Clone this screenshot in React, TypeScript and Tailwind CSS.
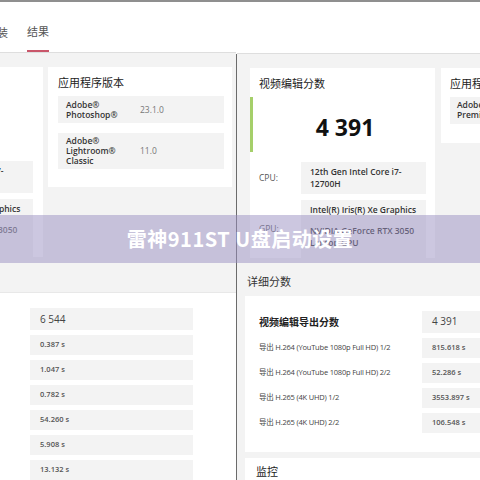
import React from 'react'

const sans = { fontFamily: '"Open Sans", "Noto Sans CJK SC", sans-serif' }
const cjk = { fontFamily: '"Liberation Serif", "Noto Sans CJK SC", serif' }

const leftTimes = ['0.387 s', '1.047 s', '0.782 s', '54.260 s', '5.908 s', '13.132 s']
const rightRows = [
  ['导出 H.264 (YouTube 1080p Full HD) 1/2', '815.618 s'],
  ['导出 H.264 (YouTube 1080p Full HD) 2/2', '52.286 s'],
  ['导出 H.265 (4K UHD) 1/2', '3553.897 s'],
  ['导出 H.265 (4K UHD) 2/2', '106.548 s'],
]

function LeftHalf() {
  return (
    <div className="flex flex-col overflow-hidden">
      <div className="h-[52px] bg-white border-b border-[#dedede] flex items-end gap-[19px] pl-0">
        <span className="text-[11px] text-[#555] pb-[11px] -ml-[3px]" style={cjk}>装</span>
        <span className="text-[11px] text-[#555] pb-[10px] border-b-2 border-[#c9566a] w-[22px] text-center" style={cjk}>结果</span>
      </div>
      <div className="h-[243px] bg-[#f3f3f3] pt-[14px] flex gap-[5px]">
        <div className="w-[43px] h-[190px] bg-white pt-[94px] flex flex-col gap-[6px] shrink-0">
          <div className="h-[32px] bg-[#f3f3f3] w-[33px] text-[8.5px] font-semibold text-[#333] pt-[4px] leading-[12px] overflow-hidden" style={sans}>
            <div className="-ml-[4px]">7-</div>
          </div>
          <div className="h-[58px] bg-[#f3f3f3] w-[33px] text-[8.5px] font-semibold text-[#333] pt-[4px] leading-[12px] overflow-hidden" style={sans}>
            <div className="-ml-[6px] whitespace-nowrap">aphics</div>
            <div className="mt-[9px] -ml-[2px] text-[#666]">3050</div>
          </div>
        </div>
        <div className="w-[184px] h-[120px] bg-white px-[10px] pt-[8px] shrink-0">
          <div className="text-[11px] text-[#222] leading-[16px]" style={cjk}>应用程序版本</div>
          <div className="mt-[5px] mr-[-2px] flex flex-col gap-[10px]">
            <div className="h-[27px] bg-[#f3f3f3] flex items-center pl-[8px] text-[8.5px] leading-[10px]" style={sans}>
              <div className="w-[74px] font-semibold text-[#333]">Adobe®<br />Photoshop®</div>
              <div className="text-[#777]">23.1.0</div>
            </div>
            <div className="h-[36px] bg-[#f3f3f3] flex items-center pl-[8px] text-[8.5px] leading-[10px]" style={sans}>
              <div className="w-[74px] font-semibold text-[#333]">Adobe®<br />Lightroom®<br />Classic</div>
              <div className="text-[#777]">11.0</div>
            </div>
          </div>
        </div>
      </div>
      <div className="flex-1 bg-white border-t border-[#e8e8e8] pt-[15px] pl-[30px]" style={sans}>
        <div className="w-[163px] h-[22px] bg-[#f3f3f3] flex items-center pl-[10px] text-[10px] text-[#444]">6 544</div>
        {leftTimes.map(t => (
          <div key={t} className="w-[163px] h-[20px] bg-[#f3f3f3] flex items-center pl-[10px] text-[7.5px] font-semibold text-[#555] mt-[5px]">{t}</div>
        ))}
      </div>
    </div>
  )
}

function RightHalf() {
  return (
    <div className="flex flex-col overflow-hidden">
      <div className="h-[52px] bg-white border-b border-[#dedede]" />
      <div className="h-[243px] bg-[#f3f3f3] pt-[14px] pl-[13px] flex flex-col">
        <div className="flex gap-[6px]">
          <div className="w-[185px] h-[190px] bg-white pt-[8px] shrink-0">
            <div className="pl-[9px] text-[11px] text-[#222] leading-[16px]" style={cjk}>视频编辑分数</div>
            <div className="mt-[5px] h-[55px] border-l-[3px] border-[#a5cf6a] flex items-center justify-center pt-[6px]">
              <span className="text-[23px] font-bold text-[#111] ml-[2px]" style={sans}>4 391</span>
            </div>
            <div className="mt-[10px] flex flex-col gap-[6px] text-[8.5px] leading-[12px]" style={sans}>
              <div className="flex items-center">
                <div className="w-[51px] pl-[9px] text-[#555]">CPU:</div>
                <div className="w-[125px] h-[32px] bg-[#f3f3f3] pl-[9px] pt-[4px] font-semibold text-[#333]">12th Gen Intel Core i7-<br />12700H</div>
              </div>
              <div className="flex items-center">
                <div className="w-[51px] pl-[9px] text-[#555]">GPU:</div>
                <div className="w-[125px] h-[58px] bg-[#f3f3f3] pl-[9px] pt-[4px] font-semibold text-[#333]">
                  <div>Intel(R) Iris(R) Xe Graphics</div>
                  <div className="mt-[9px]">NVIDIA GeForce RTX 3050<br />Laptop GPU</div>
                </div>
              </div>
            </div>
          </div>
          <div className="w-[60px] h-[75px] bg-white pt-[8px] pl-[9px] shrink-0">
            <div className="text-[11px] text-[#222] leading-[16px] whitespace-nowrap" style={cjk}>应用程序版本</div>
            <div className="mt-[5px] h-[27px] bg-[#f3f3f3] flex items-center pl-[7px] text-[8.5px] leading-[10px] font-semibold text-[#333] whitespace-nowrap" style={sans}>
              Adobe®<br />Premiere
            </div>
          </div>
        </div>
        <div className="mt-auto mb-[6px] -ml-[3px] text-[11px] text-[#333] leading-[16px]" style={cjk}>详细分数</div>
      </div>
      <div className="bg-[#f3f3f3] pl-[8px] flex-1 flex flex-col">
        <div className="h-[156px] bg-white pt-[15px] pl-[14px] shrink-0" style={sans}>
          <div className="flex items-center h-[22px]">
            <div className="w-[163px] shrink-0 text-[10px] font-bold text-[#222]" style={{ fontFamily: '"Noto Sans CJK SC", sans-serif' }}>视频编辑导出分数</div>
            <div className="w-[70px] shrink-0 h-[22px] bg-[#f3f3f3] flex items-center pl-[10px] text-[10px] text-[#444]">4 391</div>
          </div>
          {rightRows.map(([l, v]) => (
            <div key={l} className="flex items-center h-[20px] mt-[5px]">
              <div className="w-[163px] shrink-0 text-[7.5px] text-[#444] whitespace-nowrap tracking-[-0.2px]">{l}</div>
              <div className="w-[70px] shrink-0 h-[20px] bg-[#f3f3f3] flex items-center pl-[10px] text-[7.5px] font-semibold text-[#555]">{v}</div>
            </div>
          ))}
        </div>
        <div className="mt-[6px] flex-1 bg-white pl-[11px] pt-[6px] text-[11px] text-[#222]" style={cjk}>监控</div>
      </div>
    </div>
  )
}

export default function App() {
  return (
    <div className="relative w-[480px] h-[480px] overflow-hidden bg-white">
      <div className="h-[2px] bg-[#8f8f8f]" />
      <div className="grid grid-cols-[236px_1px_243px] h-[478px]">
        <LeftHalf />
        <div className="flex flex-col">
          <div className="h-[52px] bg-white" />
          <div className="flex-1 bg-[#6b6b6b]" />
        </div>
        <RightHalf />
      </div>
      <div className="absolute left-0 right-0 top-[215px] h-[48px] bg-[#9a90c2]/50 flex items-center justify-center">
        <span className="text-[20px] font-bold text-white tracking-[0.5px]" style={{ fontFamily: '"Noto Sans CJK SC", sans-serif' }}>雷神911ST U盘启动设置</span>
      </div>
    </div>
  )
}
